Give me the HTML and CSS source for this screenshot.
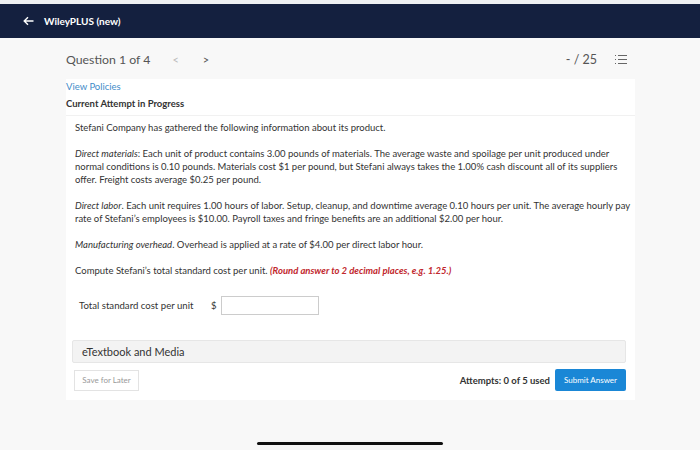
FILE: index.html
```html
<!DOCTYPE html>
<html>
<head>
<meta charset="utf-8">
<link rel="stylesheet" href="styles.css">
</head>
<body>
<div class="topgap"></div>
<header class="navbar">
  <svg class="back" width="11" height="10" viewBox="0 0 11 10"><path d="M10.5 5H1.5M5 1.2L1.2 5L5 8.8" fill="none" stroke="#fff" stroke-width="1.4"/></svg>
  <span class="brand">WileyPLUS (new)</span>
</header>
<main class="page">
  <div class="qbar">
    <div class="qleft">
      <span class="qtitle">Question 1 of 4</span>
      <span class="chev dim">&lt;</span>
      <span class="chev">&gt;</span>
    </div>
    <div class="qright">
      <span class="score">- / 25</span>
      <svg width="13" height="11" viewBox="0 0 13 11"><g stroke="#666" stroke-width="1"><path d="M1 1.5h1M1 5.5h1M1 9.5h1M4 1.5h9M4 5.5h9M4 9.5h9"/></g></svg>
    </div>
  </div>
  <section class="card">
    <div class="cardhead">
      <a class="policies">View Policies</a>
      <div class="attempt">Current Attempt in Progress</div>
    </div>
    <div class="problem">
      <p>Stefani Company has gathered the following information about its product.</p>
      <p><i>Direct materials</i>: Each unit of product contains 3.00 pounds of materials. The average waste and spoilage per unit produced under normal conditions is 0.10 pounds. Materials cost $1 per pound, but Stefani always takes the 1.00% cash discount all of its suppliers offer. Freight costs average $0.25 per pound.</p>
      <p><i>Direct labor</i>. Each unit requires 1.00 hours of labor. Setup, cleanup, and downtime average 0.10 hours per unit. The average hourly pay rate of Stefani’s employees is $10.00. Payroll taxes and fringe benefits are an additional $2.00 per hour.</p>
      <p><i>Manufacturing overhead</i>. Overhead is applied at a rate of $4.00 per direct labor hour.</p>
      <p>Compute Stefani’s total standard cost per unit. <b class="red">(Round answer to 2 decimal places, e.g. 1.25.)</b></p>
      <div class="answer">
        <span class="alabel">Total standard cost per unit</span>
        <span class="dollar">$</span>
        <span class="input"></span>
      </div>
    </div>
    <div class="media">eTextbook and Media</div>
    <div class="actions">
      <span class="save">Save for Later</span>
      <div class="submitgrp">
        <span class="attempts">Attempts: 0 of 5 used</span>
        <span class="submit">Submit Answer</span>
      </div>
    </div>
  </section>
</main>
<div class="homebar"></div>
</body>
</html>
```
FILE: styles.css
```css
* { box-sizing: border-box; }
html, body { margin: 0; padding: 0; }
body {
  width: 700px; height: 450px; overflow: hidden;
  background: #f8f8f8;
  font-family: Lato, "Open Sans", sans-serif;
  color: #333;
  display: flex; flex-direction: column;
}
.topgap { height: 4px; background: #eef0f2; flex: none; }
.navbar {
  height: 34px; background: #14203f; flex: none;
  display: flex; align-items: center;
  padding-left: 23px; gap: 10px;
}
.brand { color: #fff; font-size: 10px; font-weight: 700; }
.page { padding: 0 65px 0 66px; }
.qbar {
  height: 41px; display: flex; align-items: center; justify-content: space-between;
  padding-top: 1px; padding-right: 8px;
}
.qleft { display: flex; align-items: center; }
.qtitle { font-size: 12.3px; color: #555; }
.chev { font-size: 11px; color: #555; margin-left: 24px; }
.chev.dim { color: #bbb; margin-left: 22px; }
.qright { display: flex; align-items: center; gap: 17px; }
.score { font-size: 12.5px; color: #555; }
.card {
  background: #fff; padding: 0 0 9px 0;
}
.cardhead { padding: 0; border-bottom: 1px solid #f1f1f1; }
.policies { display: block; color: #3f8cc9; font-size: 9.5px; line-height: 13px; padding-top: 1px; }
.attempt { font-size: 9.5px; font-weight: 700; color: #333; line-height: 13px; padding: 4px 0 5px; }
.problem { padding: 5px 2px 0 9px; font-size: 9.5px; line-height: 13px; color: #333; }
.problem p { margin: 0 0 13px; }
.red { color: #c1272d; font-style: italic; }
.answer { display: flex; align-items: center; padding: 0 0 0 4px; height: 31px; font-size: 9.6px; }
.alabel { width: 132px; }
.dollar { width: 10px; }
.input { width: 98px; height: 19px; border: 1px solid #ccc; }
.media {
  margin: 19px 9px 0 6px; height: 23px; background: #f3f3f3; border: 1px solid #e6e6e6;
  border-radius: 2px; font-size: 11px; color: #333; display: flex; align-items: center; padding-left: 9px;
}
.actions { display: flex; justify-content: space-between; align-items: center; margin: 6px 9px 0 8px; }
.save {
  border: 1px solid #e3e3e3; height: 21px; width: 65px; font-size: 8px; color: #999;
  display: flex; align-items: center; justify-content: center;
}
.submitgrp { display: flex; align-items: center; gap: 5px; }
.attempts { font-size: 9.5px; font-weight: 700; color: #333; }
.submit {
  background: #1a87d6; color: #fff; font-size: 8px; height: 22px; width: 71px; border-radius: 2px;
  display: flex; align-items: center; justify-content: center;
}
.homebar {
  flex: none; align-self: center; width: 186px; height: 3px; background: #111; border-radius: 2px;
  margin-top: auto; margin-bottom: 5px;
}
```
